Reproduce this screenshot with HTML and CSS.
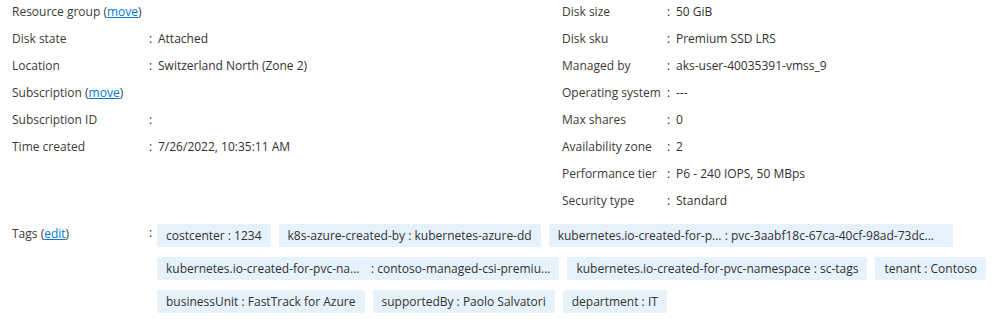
FILE: index.html
```html
<!DOCTYPE html>
<html lang="en">
<head>
  <meta charset="UTF-8">
  <title>Disk essentials</title>
  <link rel="stylesheet" href="styles.css">
</head>
<body>
  <div class="essentials">
    <div class="column left">
      <div class="row"><span class="label">Resource group (<a href="#">move</a>)</span></div>
      <div class="row"><span class="label">Disk state</span><span class="colon">:</span><span class="value">Attached</span></div>
      <div class="row"><span class="label">Location</span><span class="colon">:</span><span class="value">Switzerland North (Zone 2)</span></div>
      <div class="row"><span class="label">Subscription (<a href="#">move</a>)</span></div>
      <div class="row"><span class="label">Subscription ID</span><span class="colon">:</span><span class="value"></span></div>
      <div class="row"><span class="label">Time created</span><span class="colon">:</span><span class="value">7/26/2022, 10:35:11 AM</span></div>
    </div>
    <div class="column right">
      <div class="row"><span class="label">Disk size</span><span class="colon">:</span><span class="value">50 GiB</span></div>
      <div class="row"><span class="label">Disk sku</span><span class="colon">:</span><span class="value">Premium SSD LRS</span></div>
      <div class="row"><span class="label">Managed by</span><span class="colon">:</span><span class="value">aks-user-40035391-vmss_9</span></div>
      <div class="row"><span class="label">Operating system</span><span class="colon">:</span><span class="value">---</span></div>
      <div class="row"><span class="label">Max shares</span><span class="colon">:</span><span class="value">0</span></div>
      <div class="row"><span class="label">Availability zone</span><span class="colon">:</span><span class="value">2</span></div>
      <div class="row"><span class="label">Performance tier</span><span class="colon">:</span><span class="value">P6 - 240 IOPS, 50 MBps</span></div>
      <div class="row"><span class="label">Security type</span><span class="colon">:</span><span class="value">Standard</span></div>
    </div>
  </div>

  <div class="tags-row">
    <span class="label">Tags (<a href="#">edit</a>)</span>
    <span class="colon">:</span>
    <div class="tags">
      <span class="tag">costcenter : 1234</span>
      <span class="tag">k8s-azure-created-by : kubernetes-azure-dd</span>
      <span class="tag wide">kubernetes.io-created-for-p... : pvc-3aabf18c-67ca-40cf-98ad-73dc...</span>
      <span class="tag"><span class="tag-key">kubernetes.io-created-for-pvc-na...</span>: contoso-managed-csi-premiu...</span>
      <span class="tag">kubernetes.io-created-for-pvc-namespace : sc-tags</span>
      <span class="tag">tenant : Contoso</span>
      <span class="tag">businessUnit : FastTrack for Azure</span>
      <span class="tag">supportedBy : Paolo Salvatori</span>
      <span class="tag">department : IT</span>
    </div>
  </div>
</body>
</html>
```

FILE: styles.css
```css
body {
  margin: 0;
  padding: 1px 0 0 12px;
  font-family: "Open Sans", Arial, sans-serif;
  font-size: 12px;
  color: #323130;
  background-color: #ffffff;
}
a {
  color: #0078d4;
}
.essentials {
  display: flex;
}
.column.left {
  width: 550px;
}
.row {
  display: flex;
  height: 27px;
  line-height: 22px;
}
.label {
  color: #3b3a39;
}
.left .label {
  width: 137px;
}
.right .label {
  width: 105px;
}
.colon {
  width: 9px;
}
.tags-row {
  display: flex;
  margin-top: 7px;
}
.tags-row .label {
  width: 137px;
  line-height: 20px;
}
.tags-row .colon {
  width: 8px;
  line-height: 18px;
}
.tags {
  display: flex;
  flex-wrap: wrap;
  gap: 10px 8px;
  width: 840px;
}
.tag {
  display: inline-block;
  height: 23px;
  line-height: 23px;
  padding: 0 9px;
  background-color: #e6f2fb;
  border-radius: 2px;
  white-space: nowrap;
}
.tag.wide {
  padding-right: 19px;
}
.tag-key {
  display: inline-block;
  width: 205px;
}
```
